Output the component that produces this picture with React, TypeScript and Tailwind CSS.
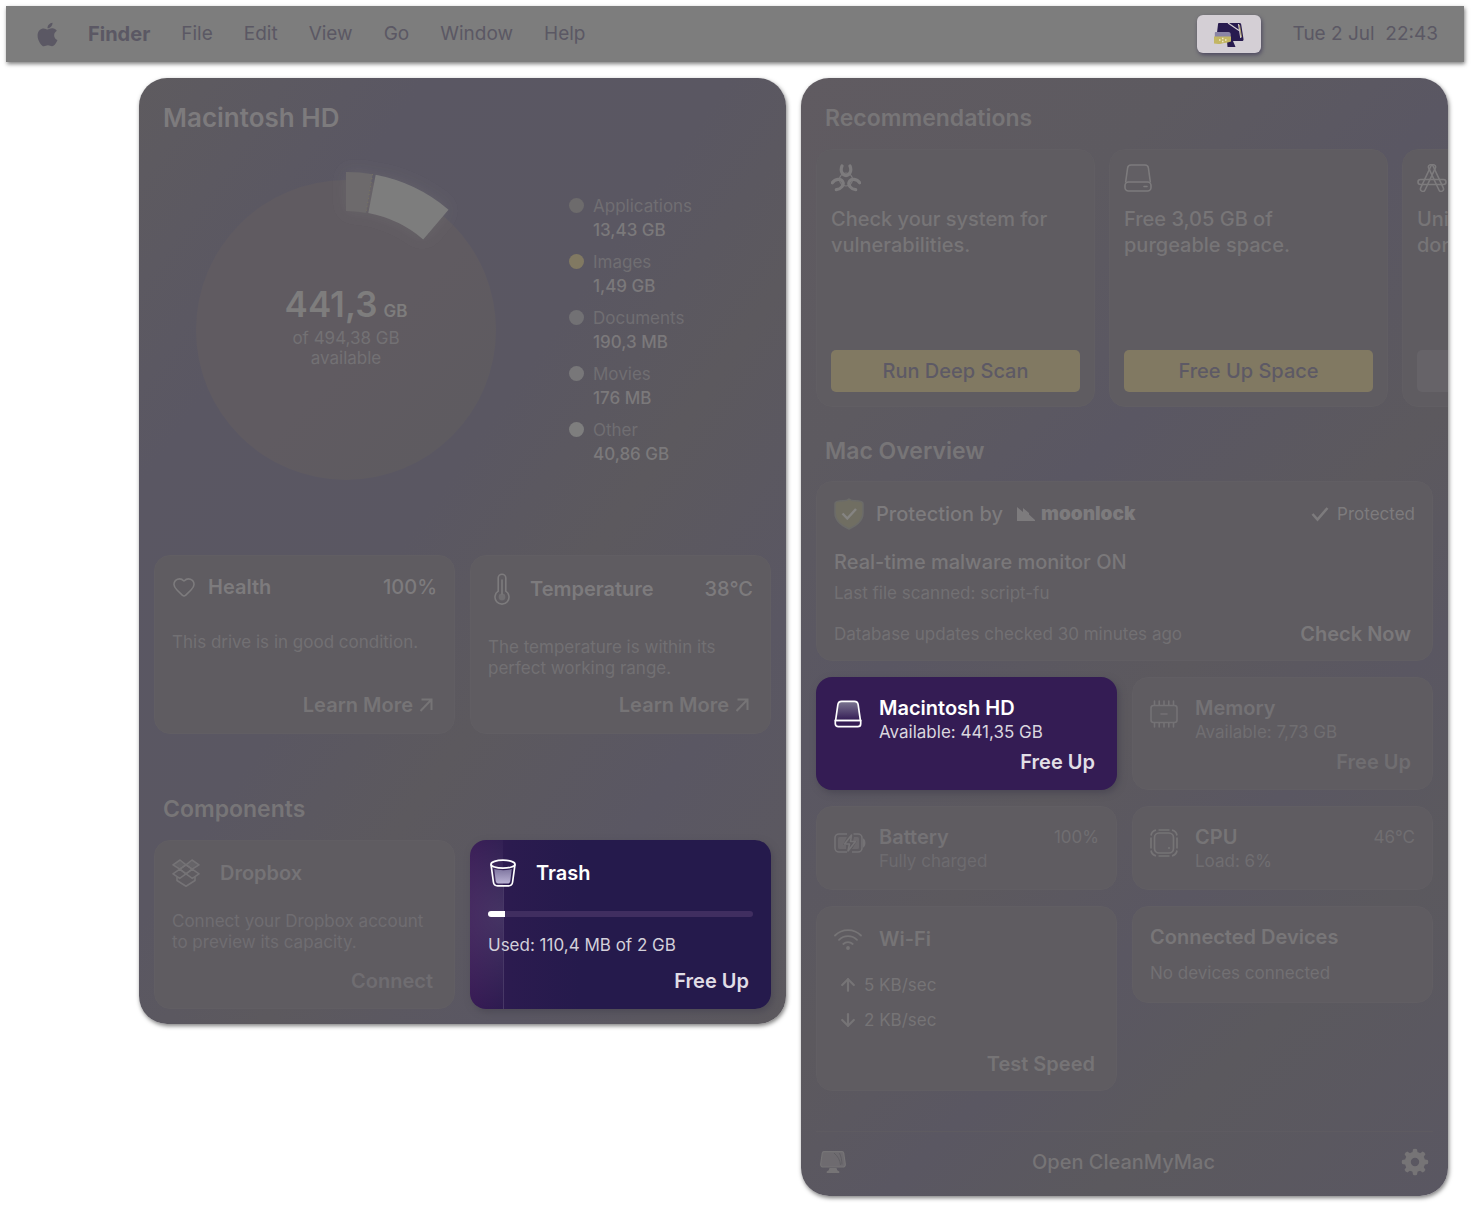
import type { ReactNode } from 'react'
import { ArrowDown, ArrowUp, Heart } from 'lucide-react'
import { FaApple } from 'react-icons/fa'

const menuItems = ['File', 'Edit', 'View', 'Go', 'Window', 'Help']

const legend = [
  { label: 'Applications', value: '13,43 GB', dot: 'bg-[#6d6b6c]' },
  { label: 'Images', value: '1,49 GB', dot: 'bg-[#817962]' },
  { label: 'Documents', value: '190,3 MB', dot: 'bg-[#727174]' },
  { label: 'Movies', value: '176 MB', dot: 'bg-[#787779]' },
  { label: 'Other', value: '40,86 GB', dot: 'bg-[#7e7e7e]' },
]

/* ---------- icons ---------- */

function BiohazardIcon() {
  // one open lobe, repeated every 120 degrees
  const lobe = 'M11 2c-2 4.5.2 9.600 4 9.600S21 6.500 19 2'
  return (
    <svg viewBox="0 0 30 28" className="h-7 w-[30px] shrink-0" fill="none" stroke="currentColor" strokeLinecap="round">
      <g strokeWidth="3.2">
        <path d={lobe} />
        <path d={lobe} transform="rotate(120 15 15.5)" />
        <path d={lobe} transform="rotate(240 15 15.5)" />
      </g>
      <circle cx="15" cy="15.5" r="6.5" strokeWidth="1.2" />
    </svg>
  )
}

function DriveIcon() {
  return (
    <svg viewBox="0 0 28 28" className="size-7 shrink-0" fill="none" stroke="currentColor" strokeWidth="1.6">
      <path d="M1.6 18.5 3.6 4C3.9 1.9 5 1 7 1h14c2 0 3.1.9 3.4 3l2 14.5" fill="currentColor" fillOpacity="0.12" />
      <rect x="1" y="18" width="26" height="9" rx="3.5" />
      <path d="M20 22.5h3" strokeLinecap="round" />
    </svg>
  )
}

function MacDriveIcon() {
  return (
    <svg viewBox="0 0 28 28" className="size-7 shrink-0" fill="none" stroke="#fff" strokeWidth="1.7">
      <defs>
        <linearGradient id="drive" x1="0" y1="0" x2="0" y2="1">
          <stop offset="0" stopColor="#7c7691" />
          <stop offset="1" stopColor="#331b54" />
        </linearGradient>
      </defs>
      <path d="M1.6 20.5 3.8 5C4.1 2.5 5.3 1.4 7.6 1.4h12.8c2.3 0 3.5 1.1 3.8 3.6l2.2 15.5z" fill="url(#drive)" />
      <path d="M1.3 20.5h25.4v3.2a3 3 0 0 1-3 3H4.3a3 3 0 0 1-3-3z" />
    </svg>
  )
}

function ThermometerIcon() {
  return (
    <svg viewBox="0 0 16 32" className="h-8 w-4 shrink-0" fill="none" stroke="currentColor" strokeWidth="1.6">
      <path d="M4.2 18.2V5a3.8 3.8 0 0 1 7.6 0v13.2a7 7 0 1 1-7.6 0z" />
      <path d="M8 7v14" strokeLinecap="round" />
      <circle cx="8" cy="24" r="3.4" fill="currentColor" fillOpacity="0.6" stroke="none" />
    </svg>
  )
}

function DropboxIcon() {
  return (
    <svg viewBox="0 0 28 28" className="size-7 shrink-0" fill="none" stroke="currentColor" strokeWidth="1.6" strokeLinejoin="round">
      <path d="m8 1 6 4.8-6.2 4.4L1 5.8z" fill="currentColor" fillOpacity="0.35" />
      <path d="m20 1 7 4.8-6.8 4.4L14 5.8z" fill="currentColor" fillOpacity="0.35" />
      <path d="m14 5.8 6.2 4.4L14 14.8 7.8 10.2z" />
      <path d="m7.8 10.2 6.2 4.6-6.3 4.6L1 14.8zM20.2 10.2l6.8 4.6-6.7 4.6-6.3-4.6z" />
      <path d="m5 17.8v3.7l9 5.7 9-5.7v-3.7" />
    </svg>
  )
}

function TrashIcon() {
  return (
    <svg viewBox="0 0 26 28" className="h-7 w-6.5 shrink-0" fill="none" stroke="#fff" strokeWidth="1.7">
      <defs>
        <linearGradient id="bin" x1="0" y1="0" x2="0" y2="1">
          <stop offset="0" stopColor="#7f76a0" />
          <stop offset="1" stopColor="#bab2d4" />
        </linearGradient>
      </defs>
      <path d="M4.2 10c4.5 1.5 13.1 1.5 17.6 0l-1.5 12.1c-.2 1.6-1.2 2.4-2.6 2.4H8.3c-1.4 0-2.4-.8-2.6-2.4z" fill="url(#bin)" stroke="none" />
      <path d="M1 5.3 3.4 23c.3 2.5 1.7 3.9 4.2 3.9h10.8c2.5 0 3.9-1.4 4.2-3.9L25 5.3" />
      <ellipse cx="13" cy="5.2" rx="12" ry="4" />
    </svg>
  )
}

function AppsIcon() {
  return (
    <svg viewBox="0 0 30 28" className="h-7 w-[30px] shrink-0" fill="none" stroke="currentColor" strokeWidth="1.6">
      <rect x="1" y="15.5" width="28" height="5" rx="2.5" />
      <rect x="-2.4" y="-14.5" width="4.8" height="29" rx="2.4" transform="translate(11 14) rotate(25)" />
      <rect x="-2.4" y="-14.5" width="4.8" height="29" rx="2.4" transform="translate(19 14) rotate(-25)" />
    </svg>
  )
}

function ShieldIcon() {
  return (
    <svg viewBox="0 0 30 32" className="h-8 w-[30px] shrink-0" fill="none">
      <path
        d="M15 1c1.5 1.3 3.5 1.7 6 1.7 3 0 8 .3 8 3V15c0 8-6 12.5-14 16C7 27.5 1 23 1 15V5.7c0-2.7 5-3 8-3 2.5 0 4.5-.4 6-1.7z"
        fill="#706e62"
        stroke="#6b6b69"
        strokeWidth="1.5"
      />
      <path d="m8.5 15.5 4.8 5 8.7-9.5" stroke="#858482" strokeWidth="2.5" />
    </svg>
  )
}

function CheckIcon() {
  return (
    <svg viewBox="0 0 18 16" className="h-4 w-[18px] shrink-0" fill="none" stroke="currentColor" strokeWidth="2.6">
      <path d="m1.5 8 5 5.5L16.5 2" />
    </svg>
  )
}

function DiagonalArrow() {
  return (
    <svg viewBox="0 0 14 14" className="size-3.5 shrink-0" fill="none" stroke="currentColor" strokeWidth="2">
      <path d="M1.5 13 12.5 1.5M2.5 1.5h10V12" />
    </svg>
  )
}

function MemoryIcon() {
  return (
    <svg viewBox="0 0 28 28" className="size-7 shrink-0" fill="none" stroke="currentColor" strokeWidth="1.6">
      <rect x="1" y="5.5" width="26" height="17" rx="2.5" fill="currentColor" fillOpacity="0.15" />
      <path d="M4.5 5V1M9.2 5V1M14 5V1M18.8 5V1M23.5 5V1M4.5 23v4M9.2 23v4M14 23v4M18.8 23v4M23.5 23v4M11 14h6" strokeLinecap="round" />
    </svg>
  )
}

function BatteryIcon() {
  return (
    <svg viewBox="0 0 32 20" className="h-5 w-8 shrink-0" fill="none" stroke="currentColor" strokeWidth="1.6">
      <path d="M13 1H5a4 4 0 0 0-4 4v10a4 4 0 0 0 4 4h8M19.5 1H24a4 4 0 0 1 4 4v10a4 4 0 0 1-4 4h-6" />
      <path
        d="M13 4H5.5A1.5 1.5 0 0 0 4 5.5v9A1.5 1.5 0 0 0 5.5 16H12v-4H9zM20 4h3.5A1.5 1.5 0 0 1 25 5.5v9a1.5 1.5 0 0 1-1.5 1.5H18l5-8h-4z"
        fill="currentColor"
        fillOpacity="0.6"
        stroke="none"
      />
      <path d="m17.5 2-7 9h5L14 18l7.5-9.5h-5z" strokeLinejoin="round" />
      <path d="M29.7 6.8c1.3.8 1.3 5.6 0 6.4z" fill="currentColor" />
    </svg>
  )
}

function CpuIcon() {
  return (
    <svg viewBox="0 0 28 28" className="size-7 shrink-0" fill="none" stroke="currentColor" strokeWidth="1.7">
      <rect x="4.5" y="4" width="19" height="20" rx="4.5" fill="currentColor" fillOpacity="0.15" />
      <path d="M8.5 1h11M8.5 27h11M1 8.5v11M27 8.5v11M1 6.5C1.5 3.5 3 1.8 6 1.2M27 6.5c-.5-3-2-4.7-5-5.3M1 21.5c.5 3 2 4.7 5 5.3M27 21.5c-.5 3-2 4.7-5 5.3" />
      <circle cx="19" cy="19" r="1" fill="currentColor" stroke="none" />
    </svg>
  )
}

function WifiIcon() {
  return (
    <svg viewBox="0 0 28 22" className="h-[22px] w-7 shrink-0" fill="none" stroke="currentColor" strokeWidth="1.8" strokeLinecap="round">
      <path d="M1 7.5a18.5 18.5 0 0 1 26 0" />
      <path d="M5 11.8a12.8 12.8 0 0 1 18 0M9.3 16a6.8 6.8 0 0 1 9.4 0" />
      <circle cx="14" cy="20" r="1" fill="currentColor" />
    </svg>
  )
}

function MoonlockMark() {
  return (
    <svg viewBox="0 0 18 14" className="h-3.5 w-[18px] shrink-0" fill="currentColor">
      <path d="M0 14V0l6 5V1l6 5v1.5L18 13v1z" />
    </svg>
  )
}

function MonitorIcon() {
  return (
    <svg viewBox="0 0 26 22" className="h-[22px] w-[26px]" fill="currentColor">
      <path d="M4 .6h18c1 0 1.5.5 1.7 1.5L25.3 13c.2 2-1 3-2.5 3H3.2C1.7 16 .5 15 .7 13L2.3 2.1C2.5 1.1 3 .6 4 .6z" fillOpacity="0.7" stroke="currentColor" strokeWidth="1.2" />
      <path d="M9.5 17h7l.8 2.3 2 1.2V22H6.7v-1.5l2-1.2z" />
      <path d="M14 2c4 3.5 6 7 6.5 12M19.5 2c1.8 4 2.3 7 2.5 11.5" stroke="#5c5a60" strokeWidth="0.8" fill="none" />
    </svg>
  )
}

function GearIcon() {
  const teeth = [0, 45, 90, 135, 180, 225, 270, 315]
  return (
    <svg viewBox="0 0 28 28" className="size-7" fill="none" stroke="currentColor">
      <circle cx="14" cy="14" r="7.2" strokeWidth="6" />
      {teeth.map((angle) => (
        <path key={angle} d="M11.3 5 12 1.2q2-1 4 0L16.7 5z" fill="currentColor" stroke="none" transform={`rotate(${angle} 14 14)`} />
      ))}
    </svg>
  )
}

function MenuBarLogo() {
  return (
    <svg viewBox="0 0 30 25" className="h-[25px] w-[30px]">
      <path d="M5 1h20.5c1 0 1.5.5 1.7 1.5L29.5 17c.2 1.5-.5 2-1.5 2H3.5C2.5 19 2 18 2.2 17L4 2.5C4.1 1.5 4.3 1 5 1z" fill="#281b4f" />
      <path d="M13 19h6l2.5 6h-8z" fill="#281b4f" />
      <path d="m14 1 11 7.5M24.5 2l2.3 14" stroke="#d6d0d4" strokeWidth="1.2" fill="none" />
      <path d="m25.5 3 2 12" stroke="#c9bd6d" strokeWidth="0.8" />
      <path d="M1.5 10h13c1.5 0 2.2 1 2.2 2.5V15H.8v-3c0-1.3 0-2 .7-2z" fill="#8a84a6" />
      <path d="M0 14.5h17v5c-3 1.5-6 1-9 2-3 .8-5.5.5-8 0z" fill="#c3b663" />
      <path d="M5 18h1.5M8 16.5h1.5M8 19.5h1.5M11 18h1.5" stroke="#efe8c8" strokeWidth="1.3" />
    </svg>
  )
}

/* ---------- shared pieces ---------- */

function Card({ children, className = '' }: { children: ReactNode; className?: string }) {
  return (
    <div className={`flex flex-col rounded-2xl border border-[#615e63] bg-[#5f5c61] ${className}`}>
      {children}
    </div>
  )
}

function TextButton({ children, className = '' }: { children: ReactNode; className?: string }) {
  return (
    <button type="button" className={`flex items-center self-end text-[20px] leading-6 font-semibold ${className}`}>
      {children}
    </button>
  )
}

function StorageChart() {
  return (
    <div className="grid size-[320px] shrink-0 place-items-center">
      <svg viewBox="0 0 320 320" className="col-start-1 row-start-1 size-full overflow-visible">
        <defs>
          <filter id="glow" x="-30%" y="-30%" width="160%" height="160%">
            <feDropShadow dx="0" dy="0" stdDeviation="8" floodColor="#8a8888" floodOpacity="0.2" />
          </filter>
          <linearGradient id="disc" x1="0" y1="0" x2="1" y2="1">
            <stop offset="0.55" stopColor="#605b61" />
            <stop offset="0.85" stopColor="#5e5b60" />
          </linearGradient>
        </defs>
        <circle cx="160" cy="160" r="150" fill="url(#disc)" />
        <g filter="url(#glow)">
          <path d="M160 2A158 158 0 0 1 186.5 4.2L180 42.7A119 119 0 0 0 160 41z" fill="#6d6b6c" />
          <path d="M186.5 4.2 180 42.7" stroke="#7a745f" strokeWidth="1" strokeDasharray="1 3" />
          <path d="M189.7 4.8A158 158 0 0 1 262.5 39.7L237.2 69.4A119 119 0 0 0 182.3 43.1z" fill="#7d7d7d" />
        </g>
      </svg>
      <div className="z-10 col-start-1 row-start-1 pb-2 text-center">
        <p className="flex items-baseline justify-center gap-1.5 text-[35px] leading-10 font-semibold text-[#7e7d7d]">
          441,3 <span className="text-[17px] leading-5">GB</span>
        </p>
        <p className="mt-1 text-[17px] leading-5 text-[#737174]">
          of 494,38 GB
          <br />
          available
        </p>
      </div>
    </div>
  )
}

/* ---------- page ---------- */

function MenuBar() {
  return (
    <header className="flex h-14 items-center bg-[#7d7d7d] pr-[26px] pl-7 text-[19px] text-[#5b5864] shadow-[1px_2px_4px_rgba(0,0,0,0.5)]">
      <button type="button" aria-label="Apple menu">
        <FaApple className="size-[27px]" />
      </button>
      <nav className="ml-[27px] flex items-center gap-[31px]">
        <button type="button" className="text-[20px] font-bold">Finder</button>
        {menuItems.map((item) => (
          <button type="button" key={item}>{item}</button>
        ))}
      </nav>
      <button
        type="button"
        aria-label="CleanMyMac"
        className="ml-auto grid h-[38px] w-16 place-items-center rounded-md bg-[#d4cfd5] shadow-[1px_2px_4px_#4d4860]"
      >
        <MenuBarLogo />
      </button>
      <time className="ml-8 whitespace-pre">Tue 2 Jul  22:43</time>
    </header>
  )
}

function DiskPanel() {
  return (
    <section className="flex-1 rounded-[28px] bg-[linear-gradient(125deg,#5e5b5f_0%,#5a5763_22%,#5a5762_45%,#5c595e_60%,#5a5763_78%,#5c595e_100%)] px-[15px] pt-6 pb-[15px] shadow-[1px_2px_4px_rgba(0,0,0,0.5)]">
      <h1 className="pl-[9px] text-[26px] leading-8 font-semibold">Macintosh HD</h1>

      <div className="mt-9 flex items-start pl-8">
        <StorageChart />
        <ul className="mt-6 ml-[63px]">
          {legend.map((entry) => (
            <li key={entry.label} className="mb-2 flex gap-[9px] text-[17px] leading-6">
              <span className={`mt-1 size-[15px] rounded-full ${entry.dot}`} />
              <span className="flex flex-col">
                <span className="text-[#706e72]">{entry.label}</span>
                <span className="font-medium text-[#7b797b]">{entry.value}</span>
              </span>
            </li>
          ))}
        </ul>
      </div>

      <div className="mt-[65px] grid grid-cols-2 gap-[15px]">
        <Card className="h-[179px] px-[17px] pt-[19px] pb-4">
          <div className="flex items-center text-[20px] leading-6 font-semibold">
            <Heart className="size-6" strokeWidth={1.6} />
            <h2 className="ml-3">Health</h2>
            <span className="ml-auto font-medium">100%</span>
          </div>
          <p className="mt-[33px] text-[17px] leading-[21px] text-[#727073]">This drive is in good condition.</p>
          <TextButton className="mt-auto mr-1 gap-1.5 text-[#767476]">
            Learn More <DiagonalArrow />
          </TextButton>
        </Card>
        <Card className="h-[179px] px-[17px] pt-[17px] pb-4">
          <div className="flex items-center pl-1.5 text-[20px] leading-6 font-semibold">
            <ThermometerIcon />
            <h2 className="ml-5">Temperature</h2>
            <span className="ml-auto font-medium">38°C</span>
          </div>
          <p className="mt-8 text-[17px] leading-[21px] text-[#727073]">
            The temperature is within its
            <br />
            perfect working range.
          </p>
          <TextButton className="mt-auto mr-1 gap-1.5 text-[#767476]">
            Learn More <DiagonalArrow />
          </TextButton>
        </Card>
      </div>

      <h2 className="mt-[59px] pl-[9px] text-[23px] leading-8 font-semibold text-[#777577]">Components</h2>
      <div className="mt-[15px] grid grid-cols-2 gap-[15px]">
        <Card className="h-[169px] px-[17px] pt-[18px] pb-[15px] text-[#6f6d71]">
          <div className="flex items-center text-[20px] leading-7 font-semibold text-[#757376]">
            <DropboxIcon />
            <h3 className="ml-5">Dropbox</h3>
          </div>
          <p className="mt-6 text-[17px] leading-[21px]">
            Connect your Dropbox account
            <br />
            to preview its capacity.
          </p>
          <TextButton className="mt-auto mr-1">Connect</TextButton>
        </Card>
        <div className="flex h-[169px] flex-col rounded-2xl bg-[linear-gradient(#ffffff20,#ffffff20),radial-gradient(circle_95px_at_33px_75px,#ffffff1c,#ffffff00),linear-gradient(to_right,#381b55,#2b1b4f_40px,#251a4c_110px)] bg-[length:1px_124px,33px_100%,100%_100%] bg-[position:33px_100%,0_0,0_0] bg-no-repeat px-[18px] pt-[19px] pb-4 text-white shadow-[2px_3px_7px_#4d4a55]">
          <div className="flex items-center pl-0.5 text-[20px] leading-7 font-semibold">
            <TrashIcon />
            <h3 className="ml-5">Trash</h3>
          </div>
          <div className="mt-6 h-[6px] overflow-hidden rounded-full bg-[#402e60]">
            <div className="h-full w-[17px] bg-white" />
          </div>
          <p className="mt-4 text-[17px] leading-6 text-[#d3d0da]">Used: 110,4 MB of 2 GB</p>
          <TextButton className="mt-auto mr-1 text-[#e0dde6]">Free Up</TextButton>
        </div>
      </div>
    </section>
  )
}

function Recommendation({ icon, text, children }: { icon: ReactNode; text: ReactNode; children: ReactNode }) {
  return (
    <Card className="h-[258px] w-[279px] shrink-0 px-3.5 pt-3 pb-3.5">
      <div className="flex h-8 items-center">{icon}</div>
      <p className="mt-3 mb-auto text-[20px] leading-[26px] font-medium whitespace-nowrap text-[#777577]">{text}</p>
      {children}
    </Card>
  )
}

function MenuPanel() {
  return (
    <section className="flex-1 overflow-hidden rounded-[28px] bg-[linear-gradient(135deg,#605b61_0%,#5d5a60_22%,#5a5763_38%,#5c595e_55%,#5a5762_68%,#5b595e_80%,#5a5762_100%)] px-[15px] pt-6 shadow-[1px_2px_4px_rgba(0,0,0,0.5)]">
      <h2 className="pl-[9px] text-[23px] leading-8 font-semibold text-[#777577]">Recommendations</h2>
      <div className="mt-[15px] -mr-[15px] flex gap-[14px] overflow-hidden">
        <Recommendation icon={<BiohazardIcon />} text={<>Check your system for<br />vulnerabilities.</>}>
          <button type="button" className="h-[42px] rounded-[5px] bg-[#817962] text-[20px] font-medium text-[#5d5965]">
            Run Deep Scan
          </button>
        </Recommendation>
        <Recommendation icon={<DriveIcon />} text={<>Free 3,05 GB of<br />purgeable space.</>}>
          <button type="button" className="h-[42px] rounded-[5px] bg-[#817962] text-[20px] font-medium text-[#5d5965]">
            Free Up Space
          </button>
        </Recommendation>
        <Recommendation icon={<AppsIcon />} text={<>Unin<br />don’t</>}>
          <button type="button" aria-label="Uninstall" className="h-[42px] rounded-[5px] bg-[#666368]" />
        </Recommendation>
      </div>

      <h2 className="mt-7 pl-[9px] text-[23px] leading-8 font-semibold text-[#777577]">Mac Overview</h2>
      <Card className="mt-[14px] h-[180px] px-[17px] pt-4 pb-3.5">
        <div className="flex items-center text-[20px] leading-8 font-medium">
          <ShieldIcon />
          <h3 className="ml-3">Protection by</h3>
          <span className="ml-3.5 flex items-center gap-1.5 text-[19px] font-black">
            <MoonlockMark /> moonlock
          </span>
          <span className="ml-auto flex items-center gap-2 text-[17px] font-normal">
            <CheckIcon /> Protected
          </span>
        </div>
        <p className="mt-5 text-[20px] leading-6 font-medium text-[#7a787a]">Real-time malware monitor ON</p>
        <p className="mt-[7px] text-[17px] leading-6 text-[#727073]">Last file scanned: script-fu</p>
        <div className="mt-auto flex items-center justify-between pr-1 text-[17px] leading-6 text-[#727073]">
          Database updates checked 30 minutes ago
          <TextButton className="text-[#7a787a]">Check Now</TextButton>
        </div>
      </Card>

      <div className="mt-4 grid grid-cols-2 items-start gap-x-[15px] gap-y-4 text-[17px] leading-6">
        <div className="flex h-[113px] flex-col rounded-2xl bg-[#341c54] px-[18px] pt-[19px] pb-4 text-white shadow-[2px_3px_7px_#4b4854]">
          <div className="flex gap-[17px]">
            <div className="pt-1"><MacDriveIcon /></div>
            <div>
              <h3 className="text-[20px] font-semibold">Macintosh HD</h3>
              <p className="text-[#dad6df]">Available: 441,35 GB</p>
            </div>
          </div>
          <TextButton className="mt-auto mr-1 text-[#e2dfe6]">Free Up</TextButton>
        </div>
        <Card className="h-[113px] px-[17px] pt-[18px] pb-[15px] text-[#747275]">
          <div className="flex gap-[17px]">
            <div className="pt-1"><MemoryIcon /></div>
            <div>
              <h3 className="text-[20px] font-semibold">Memory</h3>
              <p className="text-[#706e71]">Available: 7,73 GB</p>
            </div>
          </div>
          <TextButton className="mt-auto mr-1 text-[#706e71]">Free Up</TextButton>
        </Card>
        <Card className="h-[84px] px-[17px] pt-[18px] text-[#747275]">
          <div className="flex items-start">
            <div className="w-[45px] shrink-0 pt-2"><BatteryIcon /></div>
            <div>
              <h3 className="text-[20px] font-semibold">Battery</h3>
              <p className="text-[#6d6b6f]">Fully charged</p>
            </div>
            <span className="ml-auto text-[#706e71]">100%</span>
          </div>
        </Card>
        <Card className="h-[84px] px-[17px] pt-[18px] text-[#767476]">
          <div className="flex items-start">
            <div className="w-[45px] shrink-0 pt-1"><CpuIcon /></div>
            <div>
              <h3 className="text-[20px] font-semibold">CPU</h3>
              <p className="text-[#706e71]">Load: 6%</p>
            </div>
            <span className="ml-auto text-[#706e71]">46°C</span>
          </div>
        </Card>
        <Card className="h-[185px] px-[17px] pt-5 pb-[14px] text-[#767476]">
          <div className="flex items-center gap-[17px]">
            <WifiIcon />
            <h3 className="text-[20px] font-semibold">Wi-Fi</h3>
          </div>
          <p className="mt-[22px] flex items-center gap-1.5 pl-1"><ArrowUp className="size-5" strokeWidth={2.6} />5 KB/sec</p>
          <p className="mt-[11px] flex items-center gap-1.5 pl-1"><ArrowDown className="size-5" strokeWidth={2.6} />2 KB/sec</p>
          <TextButton className="mt-auto mr-1">Test Speed</TextButton>
        </Card>
        <Card className="h-[97px] px-[17px] pt-[18px] text-[#727073]">
          <h3 className="text-[20px] font-semibold text-[#787678]">Connected Devices</h3>
          <p className="mt-3">No devices connected</p>
        </Card>
      </div>

      <footer className="mt-10 flex h-[65px] items-center justify-between border-t border-[#5e5b61] pr-1 pb-1 pl-1 text-[#767476]">
        <button type="button" aria-label="CleanMyMac home"><MonitorIcon /></button>
        <button type="button" className="text-[20px] font-medium">Open CleanMyMac</button>
        <button type="button" aria-label="Settings"><GearIcon /></button>
      </footer>
    </section>
  )
}

export default function App() {
  return (
    <div className="min-h-screen bg-white pt-[6px] font-[Inter,sans-serif] text-[#7d7b7d]">
      <div className="pr-2 pl-[6px]">
        <MenuBar />
      </div>
      <main className="mt-4 flex items-start gap-[15px] pr-6 pl-[139px]">
        <DiskPanel />
        <MenuPanel />
      </main>
    </div>
  )
}
